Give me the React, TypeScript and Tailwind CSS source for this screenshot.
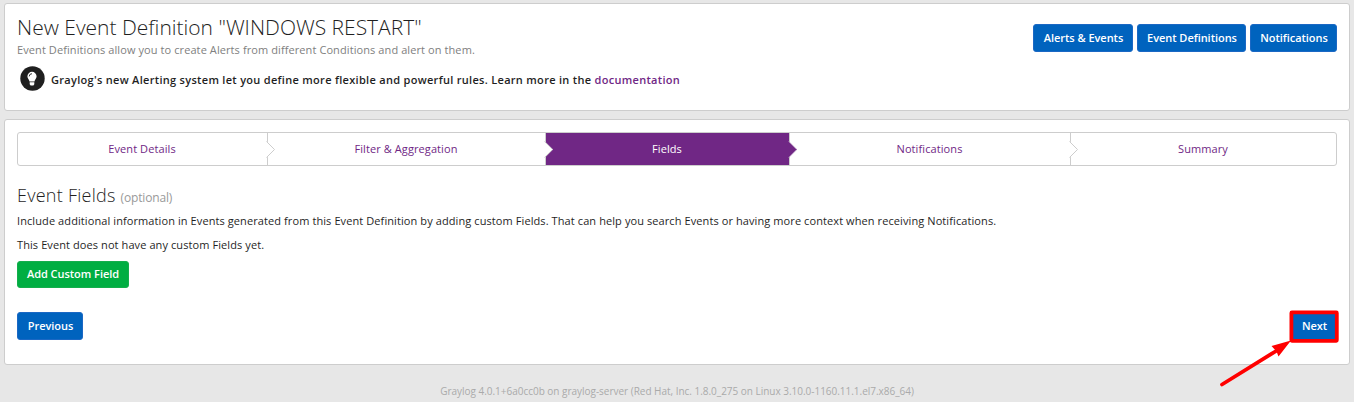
import React from 'react';

const blueButton =
  'flex h-7 items-center justify-center whitespace-nowrap rounded-[3px] border border-[#1b68c4] bg-[#0063be] pl-px text-[11px] font-semibold tracking-[-0.04px] text-white';

function Chevron({ fill, stroke }: { fill: string; stroke: string }) {
  return (
    <svg className="absolute -right-[9px] top-[8px] z-10" width="10" height="17" viewBox="0 0 10 17">
      <path d="M0 0.5h1L9 8.5L1 16.5H0z" fill={fill} />
      <path d="M0.5 0.5L8.5 8.5L0.5 16.5" fill="none" stroke={stroke} />
    </svg>
  );
}

function Step({ label, size, active, last }: { label: string; size: string; active?: boolean; last?: boolean }) {
  return (
    <div
      className={`relative flex h-8 items-center justify-center ${size} ${last ? '' : 'border-r border-[#cdcdcd]'} ${
        active ? 'bg-[#702785] text-white' : 'text-[#702785]'
      }`}
    >
      <span className="pr-px tracking-[0.09px]">{label}</span>
      {!last && <Chevron fill={active ? '#702785' : '#ffffff'} stroke={active ? '#a77db3' : '#cdcdcd'} />}
    </div>
  );
}

export default function App() {
  return (
    <div className="h-[402px] overflow-hidden bg-[#e7e7e7] px-1 pt-[3px] font-['Open_Sans',sans-serif] text-[11px] leading-4 text-[#1f1f1f]">
      <section className="flex h-[108px] justify-between rounded-[3px] border border-[#cdcdcd] bg-white pl-3 pr-3">
        <div className="whitespace-nowrap pt-[10px]">
          <h1 className="h-[27px] text-[21px] font-light leading-[26px]">New Event Definition "WINDOWS RESTART"</h1>
          <p className="mt-px tracking-[0.09px] text-[#808080]">
            Event Definitions allow you to create Alerts from different Conditions and alert on them.
          </p>
          <div className="mt-2 flex items-center gap-[6px] pl-[3px]">
            <svg width="25" height="25" viewBox="0 0 25 25">
              <circle cx="12.5" cy="12.5" r="12.2" fill="#1f1f1f" />
              <path
                d="M12 5.8a4.6 4.6 0 0 0-4.6 4.6c0 2 1.9 2.8 2.1 5.2h5c.2-2.4 2.1-3.2 2.1-5.2A4.6 4.6 0 0 0 12 5.8zM9.7 16.2h4.6v2l-.9 1.3h-2.8l-.9-1.3z"
                fill="#fff"
              />
              <path d="M9.2 10.4a2.8 2.8 0 0 1 2.8-2.7" fill="none" stroke="#1f1f1f" strokeWidth="0.9" />
            </svg>
            <p className="pt-[3px] font-semibold tracking-[0.3px]">
              Graylog's new Alerting system let you define more flexible and powerful rules. Learn more in the{' '}
              <a className="text-[#702785]">documentation</a>
            </p>
          </div>
        </div>
        <div className="flex gap-1 pt-5">
          <button className={`${blueButton} w-[100px]`}>Alerts &amp; Events</button>
          <button className={`${blueButton} w-[109px]`}>Event Definitions</button>
          <button className={`${blueButton} w-[87px]`}>Notifications</button>
        </div>
      </section>

      <section className="mt-2 h-[246px] rounded-[3px] border border-[#cdcdcd] bg-white px-3 pt-3">
        <nav className="flex h-[34px] rounded-[3px] border border-[#cdcdcd]">
          <Step label="Event Details" size="w-[250px]" />
          <Step label="Filter & Aggregation" size="w-[278px]" />
          <Step label="Fields" size="w-[244px]" active />
          <Step label="Notifications" size="w-[281px]" />
          <Step label="Summary" size="flex-1" last />
        </nav>
        <h2 className="mt-[17px] h-[25px] text-[18px] font-light leading-6 tracking-[0.25px]">
          Event Fields <small className="text-[12px] font-normal tracking-[-0.15px] text-[#999999]">(optional)</small>
        </h2>
        <p className="mt-[5px] tracking-[0.092px]">
          Include additional information in Events generated from this Event Definition by adding custom Fields. That can
          help you search Events or having more context when receiving Notifications.
        </p>
        <p className="mt-2 tracking-[0.09px]">This Event does not have any custom Fields yet.</p>
        <button className="mt-2 flex h-[27px] w-28 items-center justify-center rounded-[3px] border border-[#14ae4c] bg-[#00ae42] pb-px text-[11px] font-semibold tracking-[-0.04px] text-white">
          Add Custom Field
        </button>
        <div className="mt-6 flex justify-between">
          <button className={`${blueButton} w-[66px]`}>Previous</button>
          <div className="relative">
            <button className={`${blueButton} w-[46px]`}>Next</button>
            <svg className="absolute -left-[74px] -top-[4px] z-10" width="124" height="82" viewBox="0 0 124 82">
              <rect x="74.4" y="4.4" width="45.4" height="28.4" rx="0.5" fill="none" stroke="#ff0000" strokeWidth="3.8" />
              <path d="M5 76.5L60 42.5" stroke="#ff0000" strokeWidth="3.8" strokeLinecap="round" />
              <path d="M74 32.5L61.5 48.5L59.5 43.5L54.5 38z" fill="#ff0000" />
            </svg>
          </div>
        </div>
      </section>

      <footer className="mt-[18px] text-center text-[10px] tracking-[-0.02px] text-[#aaaaaa]">
        Graylog 4.0.1+6a0cc0b on graylog-server (Red Hat, Inc. 1.8.0_275 on Linux 3.10.0-1160.11.1.el7.x86_64)
      </footer>
    </div>
  );
}
